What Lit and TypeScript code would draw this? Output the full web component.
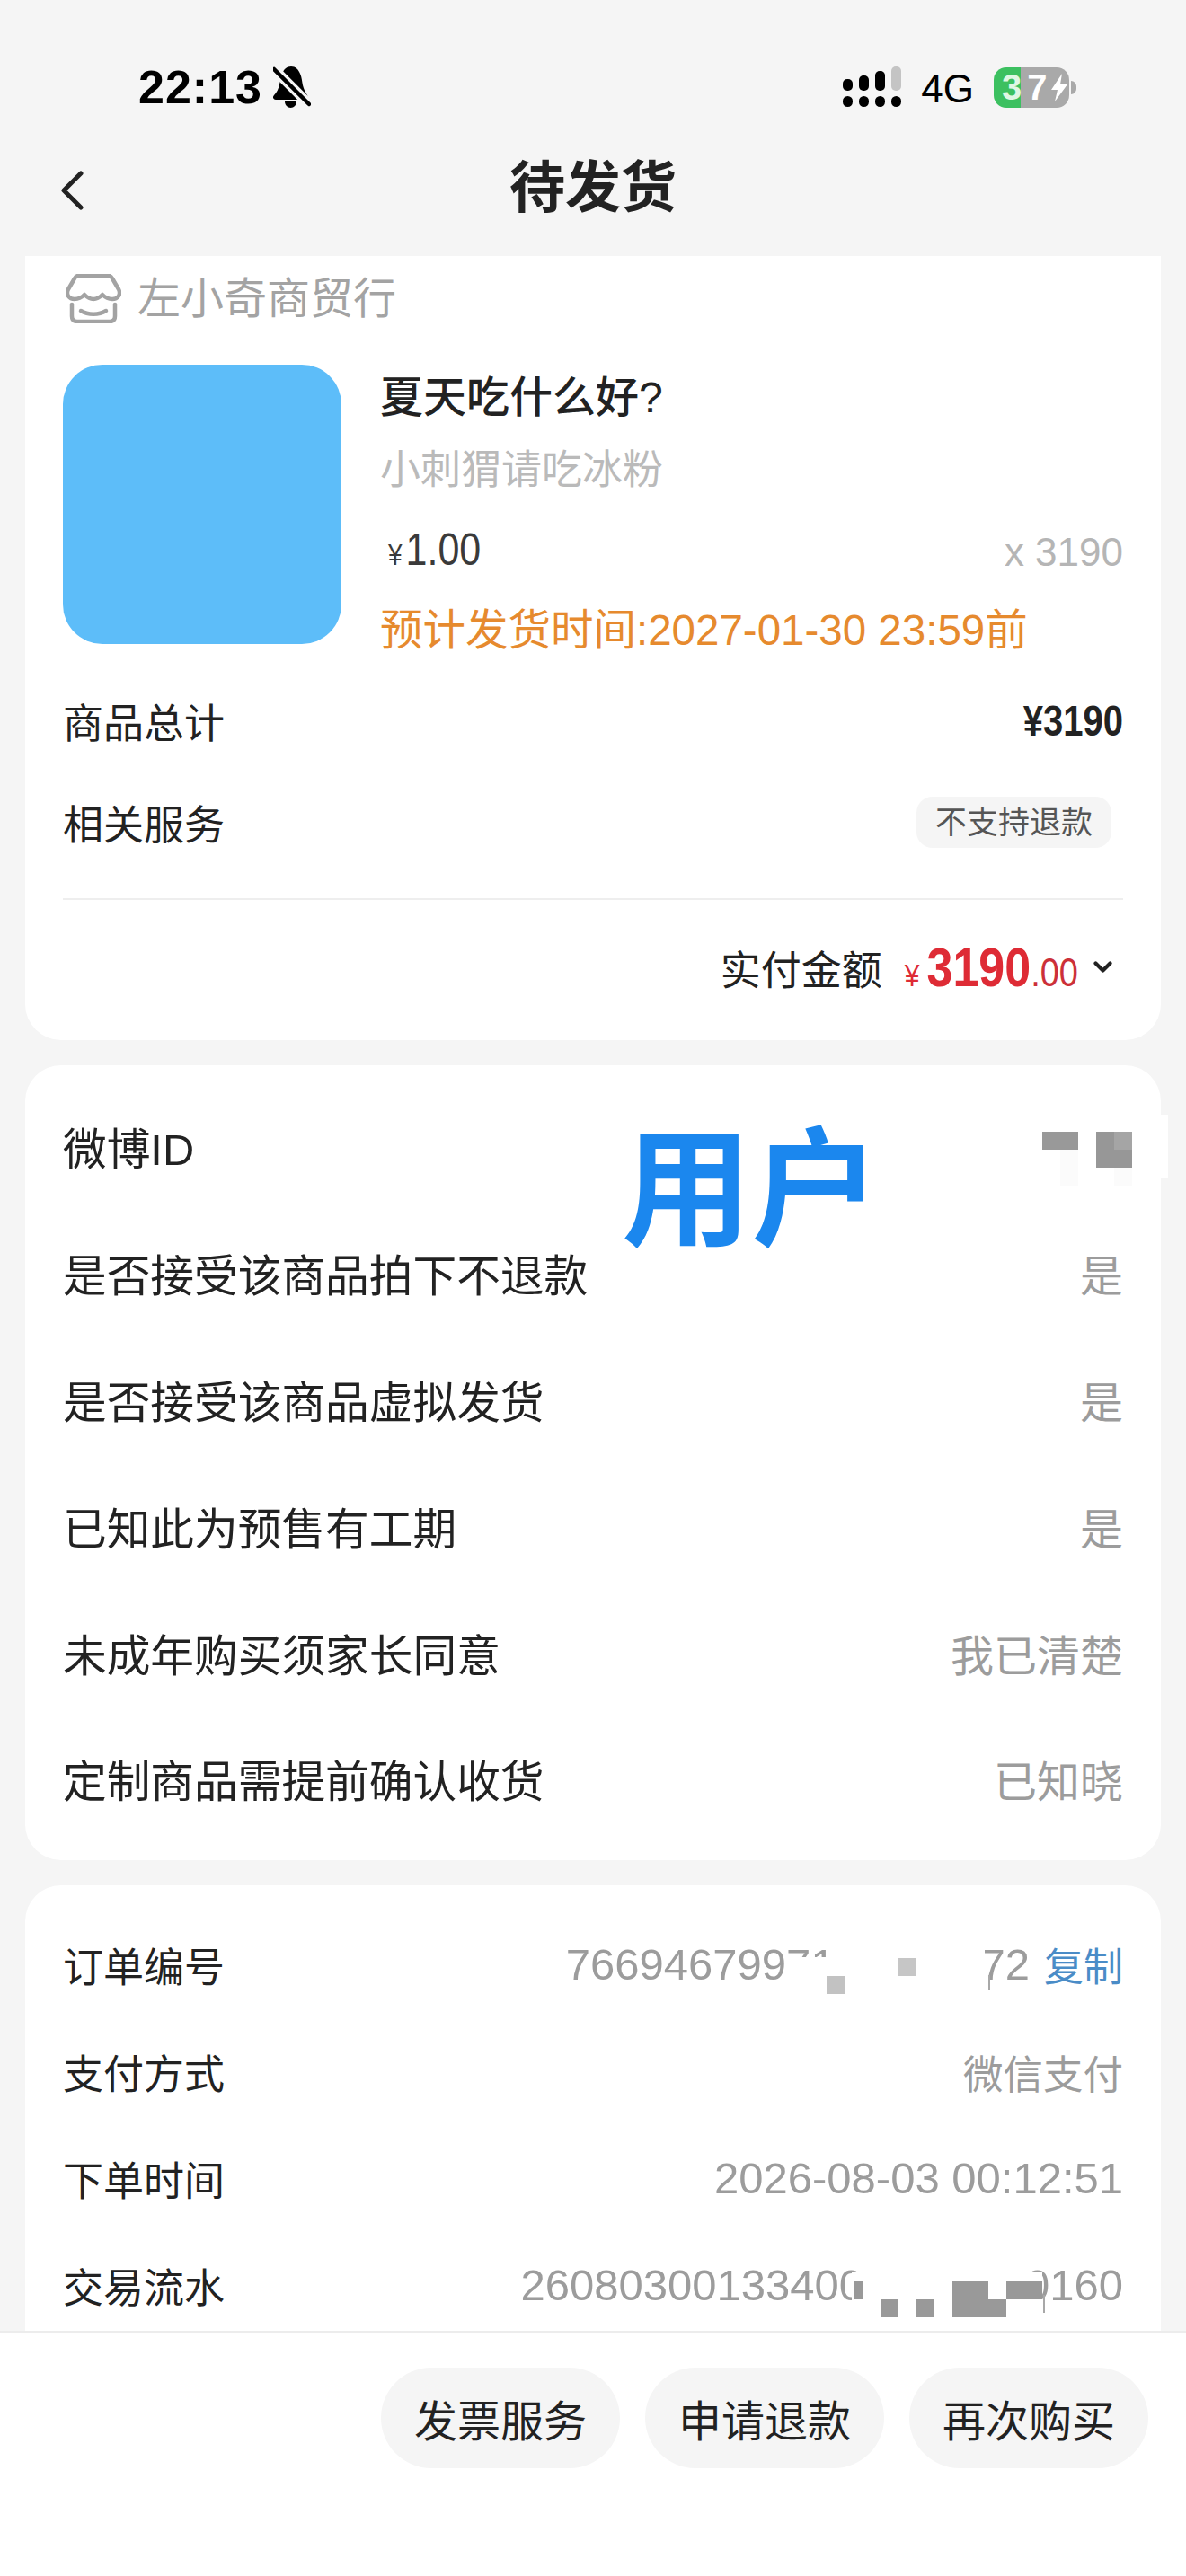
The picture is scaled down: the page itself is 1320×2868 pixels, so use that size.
import { LitElement, html, css, svg, unsafeCSS } from "lit";
import { customElement } from "lit/decorators.js";

const FONT = unsafeCSS(`"Liberation Sans", "Noto Sans CJK SC", sans-serif`);

// privacy patches painted over the screenshot, card-relative [x, y, w, h, colour]
type Patch = [number, number, number, number, string];
const IDENTITY_PATCHES: Patch[] = [
  [1105, 55, 167, 70, "#ffffff"],
  [1132, 74, 40, 20, "#999999"],
  [1192, 74, 40, 40, "#979797"],
  [1212, 74, 20, 20, "#a5a5a5"],
  [1152, 94, 20, 40, "#fbfbfb"],
  [1212, 114, 20, 20, "#fbfbfb"],
];
const ORDER_PATCHES: Patch[] = [
  [848, 80, 50, 44, "#ffffff"],
  [893, 58, 175, 66, "#ffffff"],
  [892, 101, 20, 20, "#c2c2c2"],
  [972, 81, 20, 20, "#c6c6c6"],
  [1072, 100, 2, 17, "#a8a8a8"],
  [920, 430, 212, 60, "#ffffff"],
  [922, 441, 10, 20, "#999999"],
  [952, 461, 20, 20, "#999999"],
  [992, 461, 20, 20, "#999999"],
  [1032, 441, 40, 40, "#999999"],
  [1072, 461, 20, 20, "#999999"],
  [1092, 441, 40, 20, "#999999"],
  [1133, 456, 2, 20, "#a8a8a8"],
];

const bell = svg`<svg class="bell" viewBox="0 0 42 46" width="42" height="46">
  <path d="M20 0c5 0 8 3 10 8 2 4 2 9 3 13 1 4 3 8 5 11 1 2 1 5-2 5H3c-3 0-4-3-2-5 3-3 5-7 6-12 1-4 1-8 3-12 2-5 5-8 10-8z" fill="#000"/>
  <path d="M13 39h13c0 4-3 7-6.500 7S13 43 13 39z" fill="#000"/>
  <path d="M1 3l39 39" stroke="#f5f5f5" stroke-width="11"/>
  <path d="M1 3l39 39" stroke="#000" stroke-width="4.500" stroke-linecap="round"/>
</svg>`;

const signal = svg`<svg viewBox="0 0 66 46" width="66" height="46">
  <rect x="0" y="14" width="11" height="13" rx="5" fill="#000"/>
  <rect x="18" y="10" width="11" height="17" rx="5" fill="#000"/>
  <rect x="36" y="5" width="11" height="22" rx="5" fill="#000"/>
  <rect x="54" y="0" width="11" height="27" rx="5" fill="#c4c4c4"/>
  <rect x="0" y="33" width="11" height="12" rx="5.500" fill="#000"/>
  <rect x="18" y="33" width="11" height="12" rx="5.500" fill="#000"/>
  <rect x="36" y="33" width="11" height="12" rx="5.500" fill="#000"/>
  <rect x="54" y="33" width="11" height="12" rx="5.500" fill="#000"/>
</svg>`;

const bolt = svg`<svg class="bolt" viewBox="0 0 20 31" width="20" height="31">
  <path d="M13 0L1 18h7l-3 13L19 12h-8z" fill="#fff"/>
</svg>`;

const back = svg`<svg viewBox="0 0 28 44" width="28" height="44">
  <path d="M24 3L5 22l19 19" fill="none" stroke="#222" stroke-width="5" stroke-linecap="round" stroke-linejoin="round"/>
</svg>`;

const shop = svg`<svg viewBox="0 0 62 55" width="62" height="55">
  <g fill="none" stroke="#a3a3a3" stroke-width="4.500" stroke-linecap="round" stroke-linejoin="round">
    <path d="M14 2H48C50 2 51 3 52 5L59 17C62 23 58 28 52 28C47 28 44 26 41 23C38 26 35 28 31 28C27 28 24 26 21 23C18 26 15 28 10 28C4 28 0 23 3 17L10 5C11 3 12 2 14 2Z"/>
    <path d="M7 34V47C7 51 9 53 13 53H49C53 53 55 51 55 47V34"/>
    <path d="M17 41C25 46 37 46 45 41"/>
  </g>
</svg>`;

const chevron = svg`<svg viewBox="0 0 21 14" width="21" height="14">
  <path d="M2.500 2.500l8 8 8-8" fill="none" stroke="#222" stroke-width="4.200" stroke-linecap="round" stroke-linejoin="round"/>
</svg>`;

@customElement("app-root")
export class AppRoot extends LitElement {
  static styles = css`
    :host {
      display: flex;
      flex-direction: column;
      width: 1320px;
      height: 2868px;
      overflow: hidden;
      background: #f5f5f5;
      font-family: ${FONT};
      color: #222;
    }
    .status {
      flex: none;
      height: 150px;
      box-sizing: border-box;
      padding: 74px 122px 0 154px;
      display: flex;
      align-items: flex-start;
      justify-content: space-between;
    }
    .status-left {
      display: flex;
      align-items: center;
      gap: 12px;
      height: 46px;
    }
    .time {
      font-size: 52px;
      font-weight: 700;
      letter-spacing: 1px;
      color: #000;
    }
    .status-right {
      display: flex;
      align-items: center;
      height: 46px;
    }
    .net {
      font-size: 44px;
      color: #000;
      margin: 0 22px 0 21px;
      position: relative;
      top: 2px;
    }
    .battery {
      width: 84px;
      height: 45px;
      border-radius: 14px;
      background: linear-gradient(90deg, #3cc060 30px, #a9a9a9 30px);
      display: flex;
      align-items: center;
      box-sizing: border-box;
      padding-left: 9px;
      font-size: 40px;
      font-weight: 700;
      color: #fff;
    }
    .battery .low {
      color: #dff7e4;
      margin-right: 6px;
    }
    .battery .bolt {
      margin-left: 3px;
    }
    .cap {
      width: 6px;
      height: 15px;
      margin-left: 2px;
      background: #a9a9a9;
      border-radius: 0 6px 6px 0;
    }
    .nav {
      flex: none;
      height: 135px;
      display: flex;
      align-items: center;
      justify-content: center;
      position: relative;
      padding-bottom: 28px;
      box-sizing: border-box;
    }
    .nav .back {
      position: absolute;
      left: 66px;
      top: 40px;
    }
    .nav h1 {
      margin: 0;
      font-size: 62px;
      font-weight: 700;
      color: #222;
    }
    .scroll {
      flex: 1;
      min-height: 0;
      overflow: hidden;
      padding: 0 28px;
      display: flex;
      flex-direction: column;
      gap: 28px;
    }
    .card {
      flex: none;
      position: relative;
      background: #fff;
      border-radius: 40px;
      padding: 0 42px;
    }
    .card.first {
      border-radius: 0 0 40px 40px;
      padding-top: 17px;
      padding-bottom: 0;
    }
    .card.info {
      padding-top: 20px;
      padding-bottom: 20px;
    }
    .card.order {
      padding-top: 29px;
      height: 600px;
      border-radius: 40px 40px 0 0;
    }
    .shop {
      height: 60px;
      display: flex;
      align-items: center;
      gap: 18px;
      padding-left: 3px;
      font-size: 48px;
      color: #a3a3a3;
    }
    .shop span {
      margin-bottom: 8px;
    }
    .product {
      display: flex;
      align-items: flex-start;
      margin-top: 44px;
      height: 340px;
    }
    .thumb {
      flex: none;
      width: 310px;
      height: 311px;
      border-radius: 44px;
      background: #5dbdf9;
      margin-right: 43px;
    }
    .details {
      flex: 1;
      min-width: 0;
      display: flex;
      flex-direction: column;
      padding-top: 2px;
    }
    .details > div {
      height: 70px;
      line-height: 70px;
      white-space: nowrap;
    }
    .title {
      font-size: 48px;
      font-weight: 500;
      color: #222;
    }
    .sub {
      margin-top: 11px;
      font-size: 45px;
      color: #bababa;
    }
    .price-row {
      margin-top: 21px;
      display: flex;
      justify-content: space-between;
      align-items: center;
    }
    /* the app's number face is condensed: a smaller size stretched upward */
    .price {
      display: inline-block;
      padding-left: 9px;
      color: #3a3a3a;
      font-size: 43px;
      transform: scaleY(1.16);
    }
    .price small {
      font-size: 28px;
      margin-right: 4px;
    }
    .qty {
      font-size: 44px;
      color: #b5b5b5;
    }
    .ship {
      margin-top: 17px;
      font-size: 47.500px;
      color: #e68a2e;
    }
    .sum-row {
      display: flex;
      align-items: center;
      justify-content: space-between;
      height: 113px;
      font-size: 45px;
    }
    .sum-value {
      display: inline-block;
      font-size: 40px;
      font-weight: 700;
      transform: scaleY(1.19);
    }
    .tag {
      margin-right: 13px;
      height: 57px;
      line-height: 57px;
      padding: 0 21px;
      border-radius: 18px;
      background: #f5f5f5;
      font-size: 35px;
      color: #555;
    }
    .divider {
      margin-top: 28px;
      height: 2px;
      background: #eeeeee;
    }
    .total {
      height: 156px;
      display: flex;
      align-items: center;
      justify-content: flex-end;
      font-size: 45px;
      padding-right: 12px;
      padding-bottom: 6px;
      box-sizing: border-box;
    }
    .amount {
      margin-left: 25px;
      color: #de2b35;
      font-weight: 700;
      font-size: 52px;
      display: flex;
      align-items: baseline;
      transform: scaleY(1.16);
    }
    .amount small {
      font-size: 30px;
      font-weight: 400;
      margin-right: 8px;
    }
    .amount i {
      font-style: normal;
      font-weight: 400;
      font-size: 38px;
      color: #cc3039;
    }
    .total svg {
      margin-left: 17px;
    }
    .row {
      display: flex;
      align-items: center;
      justify-content: space-between;
      white-space: nowrap;
    }
    .info .row {
      height: 140.800px;
      font-size: 48.700px;
    }
    .order .row {
      height: 119px;
      font-size: 45px;
    }
    .value {
      display: flex;
      align-items: center;
      font-size: 48px;
      color: #9c9c9c;
    }
    .order .value {
      font-size: 49px;
    }
    .order .value.cjk {
      font-size: 44.500px;
    }
    .gap-a {
      width: 162px;
    }
    .gap-b {
      width: 180px;
    }
    .copy {
      margin-left: 16px;
      font-size: 44px;
      color: #4a8cc7;
    }
    .patch {
      position: absolute;
    }
    .patch.bump {
      left: 1200px;
      top: 58px;
      width: 72px;
      height: 62px;
      border-radius: 24px;
      background: #fff;
    }
    .stamp {
      position: absolute;
      left: 664px;
      top: 69px;
      font-size: 144px;
      font-weight: 700;
      line-height: 1;
      color: #1b87ee;
      white-space: nowrap;
    }
    .footer {
      flex: none;
      height: 273px;
      box-sizing: border-box;
      background: #fff;
      border-top: 2px solid #ececec;
      padding: 39px 42px 0 0;
      display: flex;
      justify-content: flex-end;
      align-items: flex-start;
      gap: 28px;
    }
    .btn {
      width: 266px;
      height: 112px;
      border-radius: 56px;
      background: #f5f5f5;
      display: flex;
      align-items: center;
      justify-content: center;
      font-size: 48px;
      color: #222;
    }
  `;

  private patches(list: Patch[]) {
    return list.map(
      ([x, y, w, h, c]) =>
        html`<div class="patch" style="left:${x}px;top:${y}px;width:${w}px;height:${h}px;background:${c}"></div>`
    );
  }

  render() {
    return html`
      <div class="status">
        <div class="status-left"><span class="time">22:13</span>${bell}</div>
        <div class="status-right">
          ${signal}
          <span class="net">4G</span>
          <div class="battery"><span class="low">3</span><span>7</span>${bolt}</div>
          <div class="cap"></div>
        </div>
      </div>
      <div class="nav">
        <span class="back">${back}</span>
        <h1>待发货</h1>
      </div>
      <div class="scroll">
        <section class="card first">
          <div class="shop">${shop}<span>左小奇商贸行</span></div>
          <div class="product">
            <div class="thumb"></div>
            <div class="details">
              <div class="title">夏天吃什么好?</div>
              <div class="sub">小刺猬请吃冰粉</div>
              <div class="price-row">
                <span class="price"><small>¥</small>1.00</span>
                <span class="qty">x 3190</span>
              </div>
              <div class="ship">预计发货时间:2027-01-30 23:59前</div>
            </div>
          </div>
          <div class="sum-row"><span>商品总计</span><span class="sum-value">¥3190</span></div>
          <div class="sum-row"><span>相关服务</span><span class="tag">不支持退款</span></div>
          <div class="divider"></div>
          <div class="total">
            <span>实付金额</span>
            <span class="amount"><small>¥</small>3190<i>.00</i></span>
            ${chevron}
          </div>
        </section>

        <section class="card info">
          <div class="row"><span>微博ID</span></div>
          <div class="row"><span>是否接受该商品拍下不退款</span><span class="value">是</span></div>
          <div class="row"><span>是否接受该商品虚拟发货</span><span class="value">是</span></div>
          <div class="row"><span>已知此为预售有工期</span><span class="value">是</span></div>
          <div class="row"><span>未成年购买须家长同意</span><span class="value">我已清楚</span></div>
          <div class="row"><span>定制商品需提前确认收货</span><span class="value">已知晓</span></div>
          <div class="patch bump"></div>
          ${this.patches(IDENTITY_PATCHES)}
          <div class="stamp">用户</div>
        </section>

        <section class="card order">
          <div class="row">
            <span>订单编号</span>
            <span class="value">76694679971<span class="gap-a"></span>72<span class="copy">复制</span></span>
          </div>
          <div class="row"><span>支付方式</span><span class="value cjk">微信支付</span></div>
          <div class="row"><span>下单时间</span><span class="value">2026-08-03 00:12:51</span></div>
          <div class="row">
            <span>交易流水</span>
            <span class="value">26080300133400<span class="gap-b"></span>0160</span>
          </div>
          ${this.patches(ORDER_PATCHES)}
        </section>
      </div>
      <div class="footer">
        <div class="btn">发票服务</div>
        <div class="btn">申请退款</div>
        <div class="btn">再次购买</div>
      </div>
    `;
  }
}
